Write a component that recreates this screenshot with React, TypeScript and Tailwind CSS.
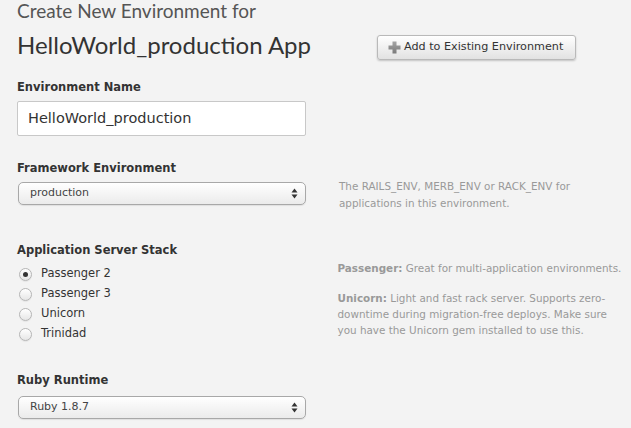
import React from "react";

const body = { fontFamily: '"DejaVu Sans", "Liberation Sans", sans-serif' };
const title = { fontFamily: 'Lato, "Open Sans", sans-serif' };

function SelectBox({ value }: { value: string }) {
  return (
    <div className="flex h-[23px] w-[288px] items-center justify-between rounded-[5px] border border-[#a8a8a8] bg-gradient-to-b from-white to-[#ebebeb] pl-[11px] pr-[7px] shadow-[0_1px_1px_rgba(0,0,0,0.08)]">
      <span className="text-[11px] text-[#444]">{value}</span>
      <svg width="7" height="11" viewBox="0 0 7 11">
        <path d="M3.5 0.5 L6.5 4.5 L0.5 4.5 Z" fill="#333" />
        <path d="M3.5 10.5 L6.5 6.5 L0.5 6.5 Z" fill="#333" />
      </svg>
    </div>
  );
}

function Radio({ label, checked }: { label: string; checked?: boolean }) {
  return (
    <div className="flex h-[20px] items-center">
      <div className="ml-[2px] flex h-[13px] w-[13px] items-center justify-center rounded-full border border-[#b5b5b5] bg-gradient-to-b from-white to-[#e6e6e6] shadow-[0_1px_1px_rgba(0,0,0,0.06)]">
        {checked && <div className="h-[5px] w-[5px] rounded-full bg-[#333]" />}
      </div>
      <span className="ml-[9px] text-[11.5px] text-[#333]">{label}</span>
    </div>
  );
}

export default function App() {
  return (
    <div
      className="relative h-[428px] w-[631px] overflow-hidden bg-[#f3f3f3] pl-[17px] pt-[1px]"
      style={body}
    >
      <div
        className="text-[19px] leading-[20px] text-[#555]"
        style={title}
      >
        Create New Environment for
      </div>
      <div className="mt-[9px] flex items-center">
        <div
          className="w-[360px] text-[24px] leading-[30px] text-[#333]"
          style={title}
        >
          HelloWorld_production App
        </div>
        <button className="mt-[5px] flex h-[25px] items-center rounded-[3px] border border-[#b9b9b9] bg-gradient-to-b from-white to-[#e2e2e2] pl-[10px] pr-[12px] shadow-[0_1px_2px_rgba(0,0,0,0.2)]">
          <svg width="13" height="13" viewBox="0 0 13 13" className="mr-[3px]">
            <defs>
              <linearGradient id="pg" x1="0" y1="0" x2="0" y2="1">
                <stop offset="0" stopColor="#a5a5a5" />
                <stop offset="1" stopColor="#7a7a7a" />
              </linearGradient>
            </defs>
            <path d="M4.5 0.5h4v4h4v4h-4v4h-4v-4h-4v-4h4z" fill="url(#pg)" />
          </svg>
          <span className="text-[11.2px] text-[#333]">Add to Existing Environment</span>
        </button>
      </div>

      {/* Environment Name */}
      <div className="mt-[19px] text-[11.5px] font-bold leading-[16px] text-[#333]">
        Environment Name
      </div>
      <div className="mt-[6px] flex h-[35px] w-[289px] items-center rounded-[2px] border border-[#c8c8c8] bg-white pl-[10px]">
        <span className="text-[14.5px] text-[#333]">HelloWorld_production</span>
      </div>

      {/* Framework */}
      <div className="mt-[24px] flex">
        <div className="w-[288px]">
          <div className="text-[11.5px] font-bold leading-[16px] text-[#333]">
            Framework Environment
          </div>
          <div className="mt-[6px] ml-[1px]">
            <SelectBox value="production" />
          </div>
        </div>
        <div className="ml-[34px] mt-[18px] text-[10.4px] leading-[17px] text-[#999]">
          The RAILS_ENV, MERB_ENV or RACK_ENV for
          <br />
          applications in this environment.
        </div>
      </div>

      {/* App server stack */}
      <div className="mt-[30px] flex">
        <div className="w-[288px]">
          <div className="text-[11.5px] font-bold leading-[16px] text-[#333]">
            Application Server Stack
          </div>
          <div className="mt-[6px]">
            <Radio label="Passenger 2" checked />
            <Radio label="Passenger 3" />
            <Radio label="Unicorn" />
            <Radio label="Trinidad" />
          </div>
        </div>
        <div className="ml-[34px] mt-[18px] w-[295px] text-[10.4px] leading-[16px] text-[#999]">
          <div>
            <span className="font-bold">Passenger:</span> Great for multi-application environments.
          </div>
          <div className="mt-[14px]">
            <span className="font-bold">Unicorn:</span> Light and fast rack server. Supports zero-
            <br />
            downtime during migration-free deploys. Make sure
            <br />
            you have the Unicorn gem installed to use this.
          </div>
        </div>
      </div>

      {/* Ruby runtime */}
      <div className="mt-[28px] text-[11.5px] font-bold leading-[16px] text-[#333]">
        Ruby Runtime
      </div>
      <div className="mt-[8px] ml-[1px]">
        <SelectBox value="Ruby 1.8.7" />
      </div>
    </div>
  );
}
